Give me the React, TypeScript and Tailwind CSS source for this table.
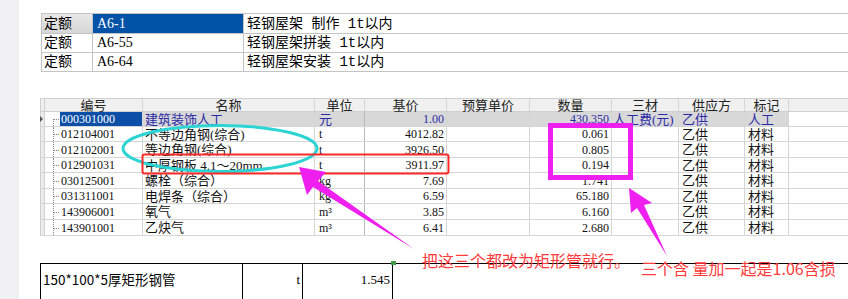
import React from "react";

const CJK = { fontFamily: '"Liberation Serif", "Noto Sans CJK SC", serif' } as React.CSSProperties;
const MONO = { fontFamily: '"Liberation Mono", "Noto Sans CJK SC", monospace' } as React.CSSProperties;
const SANS = { fontFamily: '"Noto Sans CJK SC", "Noto Sans", sans-serif' } as React.CSSProperties;

type Row = {
  code: string;
  name: string;
  unit: string;
  price: string;
  qty: string;
  sancai?: string;
  supply: string;
  mark: string;
  sel?: boolean;
  h: string;
};

const rows: Row[] = [
  { code: "000301000", name: "建筑装饰人工", unit: "元", price: "1.00", qty: "430.350", sancai: "人工费(元)", supply: "乙供", mark: "人工", sel: true, h: "h-[15px]" },
  { code: "012104001", name: "不等边角钢(综合)", unit: "t", price: "4012.82", qty: "0.061", supply: "乙供", mark: "材料", h: "h-[15px]" },
  { code: "012102001", name: "等边角钢(综合)", unit: "t", price: "3926.50", qty: "0.805", supply: "乙供", mark: "材料", h: "h-[16px]" },
  { code: "012901031", name: "中厚钢板 4.1～20mm", unit: "t", price: "3911.97", qty: "0.194", supply: "乙供", mark: "材料", h: "h-[15px]" },
  { code: "030125001", name: "螺栓（综合）", unit: "kg", price: "7.69", qty: "1.741", supply: "乙供", mark: "材料", h: "h-[16px]" },
  { code: "031311001", name: "电焊条（综合）", unit: "kg", price: "6.59", qty: "65.180", supply: "乙供", mark: "材料", h: "h-[15px]" },
  { code: "143906001", name: "氧气", unit: "m³", price: "3.85", qty: "6.160", supply: "乙供", mark: "材料", h: "h-[16px]" },
  { code: "143901001", name: "乙炔气", unit: "m³", price: "6.41", qty: "2.680", supply: "乙供", mark: "材料", h: "h-[16px]" },
];

function TopTable() {
  const data = [
    ["定额", "A6-1", "轻钢屋架 制作 1t以内"],
    ["定额", "A6-55", "轻钢屋架拼装 1t以内"],
    ["定额", "A6-64", "轻钢屋架安装 1t以内"],
  ];
  return (
    <div className="ml-[1px] mt-[13px] flex flex-col border-t border-[#c4c4c4] text-[14px] leading-none text-black" style={CJK}>
      {data.map((r, i) => (
        <div key={i} className={`flex border-b border-[#c4c4c4] ${i === 0 ? "h-[20px]" : "h-[19px]"}`}>
          <div className={`flex w-[51px] items-center border-l border-[#c4c4c4] pl-[2px] ${i === 0 ? "bg-gradient-to-b from-[#e8e8e8] to-[#d6d6d6]" : ""}`}>{r[0]}</div>
          <div className={`flex w-[151px] items-center border-l border-[#c4c4c4] pl-[4px] ${i === 0 ? "bg-[#0052a6] text-white" : ""}`}>{r[1]}</div>
          <div className="flex w-[305px] items-center whitespace-pre border-l border-[#c4c4c4] pl-[3px]" style={MONO}>{r[2]}</div>
        </div>
      ))}
    </div>
  );
}

function MainTable() {
  const line = "border-r border-[#d6d6d6]";
  return (
    <div className="mt-[26px] flex flex-col text-[13px] leading-none" style={CJK}>
      <div className="flex h-[14px] border-b border-t border-[#cfcfcf] bg-[#f0f0f0] text-[13px] text-[#222]">
        <div className="w-[5px] border-l border-r border-[#cfcfcf]" />
        <div className={`flex w-[98px] items-center justify-center ${line}`}>编号</div>
        <div className={`flex w-[172px] items-center justify-center ${line}`}>名称</div>
        <div className={`flex w-[50px] items-center justify-center ${line}`}>单位</div>
        <div className={`flex w-[82px] items-center justify-center ${line}`}>基价</div>
        <div className={`flex w-[83px] items-center justify-center ${line}`}>预算单价</div>
        <div className={`flex w-[82px] items-center justify-center ${line}`}>数量</div>
        <div className={`flex w-[67px] items-center justify-center ${line}`}>三材</div>
        <div className={`flex w-[66px] items-center justify-center ${line}`}>供应方</div>
        <div className={`flex w-[44px] items-center justify-center ${line}`}>标记</div>
      </div>
      {rows.map((r, i) => {
        const txt = r.sel ? "text-[#2b2ba6]" : "text-[#111]";
        const selBg = r.sel ? "bg-[#d8d8d8]" : "";
        return (
          <div key={r.code} className={`flex ${r.h} border-b border-[#d6d6d6] ${txt}`}>
            <div className="relative w-[5px] border-l border-r border-[#cfcfcf] bg-[#ececec]">
              {r.sel && <div className="absolute left-[-1px] top-[4px] h-0 w-0 border-y-[3px] border-l-[3px] border-y-transparent border-l-[#555]" />}
            </div>
            <div className="relative w-[15px] bg-white">
              <div className={`absolute left-[8px] bottom-0 border-l border-dotted border-[#8a8a8a] ${i === 0 ? "top-1/2" : "top-0"}`} />
              <div className="absolute left-[8px] right-[1px] top-1/2 border-t border-dotted border-[#8a8a8a]" />
            </div>
            <div className={`flex w-[83px] items-center pl-[1px] text-[12px] ${line} ${r.sel ? "bg-[#0b4fa6] text-white" : ""}`}>{r.code}</div>
            <div className={`flex w-[172px] items-center whitespace-nowrap pl-[2px] ${line} ${selBg}`}>{r.name}</div>
            <div className={`flex w-[50px] items-center pl-[4px] border-r border-[#b8b8b8] ${r.sel ? "bg-[#d8d8d8] text-[13px]" : "text-[12px]"}`}>{r.unit}</div>
            <div className={`flex w-[82px] items-center justify-end pr-[2px] text-[12px] ${line} ${selBg}`}>{r.price}</div>
            <div className={`w-[83px] ${line} ${selBg}`} />
            <div className={`flex w-[82px] items-center justify-end pr-[2px] text-[12px] ${line} ${selBg}`}>{r.qty}</div>
            <div className={`flex w-[67px] items-center whitespace-nowrap pl-[1px] ${line} ${selBg}`}>{r.sancai ?? ""}</div>
            <div className={`flex w-[66px] items-center pl-[3px] ${line} ${selBg}`}>{r.supply}</div>
            <div className={`flex w-[44px] items-center pl-[3px] ${line} ${selBg}`}>{r.mark}</div>
          </div>
        );
      })}
    </div>
  );
}

function BottomTable() {
  return (
    <div className="mt-[27px] flex h-[50px] border-t-[1.5px] border-black leading-none text-black">
      <div className="flex w-[202px] items-center border-l-[1.5px] border-black pl-[2px] pb-[4px] text-[13.5px]" style={SANS}>
        150*100*5厚矩形钢管
      </div>
      <div className="flex w-[60px] items-center justify-end border-l-[1.5px] border-black pr-[2px] pb-[4px] text-[13px]" style={CJK}>
        t
      </div>
      <div className="relative flex w-[91px] items-center justify-end border-l-[1.5px] border-r-[1.5px] border-black pr-[2px] pb-[4px] text-[13px]" style={CJK}>
        1.545
        <div className="absolute right-[-4px] top-[-3px] h-[4px] w-[5px] bg-[#3f9f3f]" />
      </div>
    </div>
  );
}

export default function App() {
  return (
    <div className="relative flex h-[299px] w-[848px] overflow-hidden bg-white">
      <div className="w-[19px] shrink-0 bg-[#f1f1f3]" />
      <div className="flex flex-1 flex-col pl-[21px]">
        <TopTable />
        <MainTable />
        <BottomTable />
      </div>

      <svg className="pointer-events-none absolute left-0 top-0" width="848" height="299" viewBox="0 0 848 299">
        <ellipse cx="220" cy="148.5" rx="97" ry="23" fill="none" stroke="#2cd4d4" strokeWidth="3" />
        <rect x="142.5" y="154.5" width="306" height="19" rx="2" fill="none" stroke="#ff2a2a" strokeWidth="2" />
        <rect x="550.5" y="125.5" width="80" height="52" fill="none" stroke="#ef1fef" strokeWidth="5" />
        <polygon points="299,167 326,172 318,181 414,249 313,187 307,195" fill="#ef1fef" />
        <polygon points="629,188 652,203 644,205 667,256 637,208 631,213" fill="#ef1fef" />
      </svg>

      <div className="absolute left-[422px] top-[252px] whitespace-nowrap text-[16px] leading-none text-[#ff3b3b]" style={SANS}>
        把这三个都改为矩形管就行。
      </div>
      <div className="absolute left-[641px] top-[260px] whitespace-nowrap text-[16px] leading-none text-[#ff3b3b]" style={SANS}>
        三个含 量加一起是1.06含损
      </div>
    </div>
  );
}
